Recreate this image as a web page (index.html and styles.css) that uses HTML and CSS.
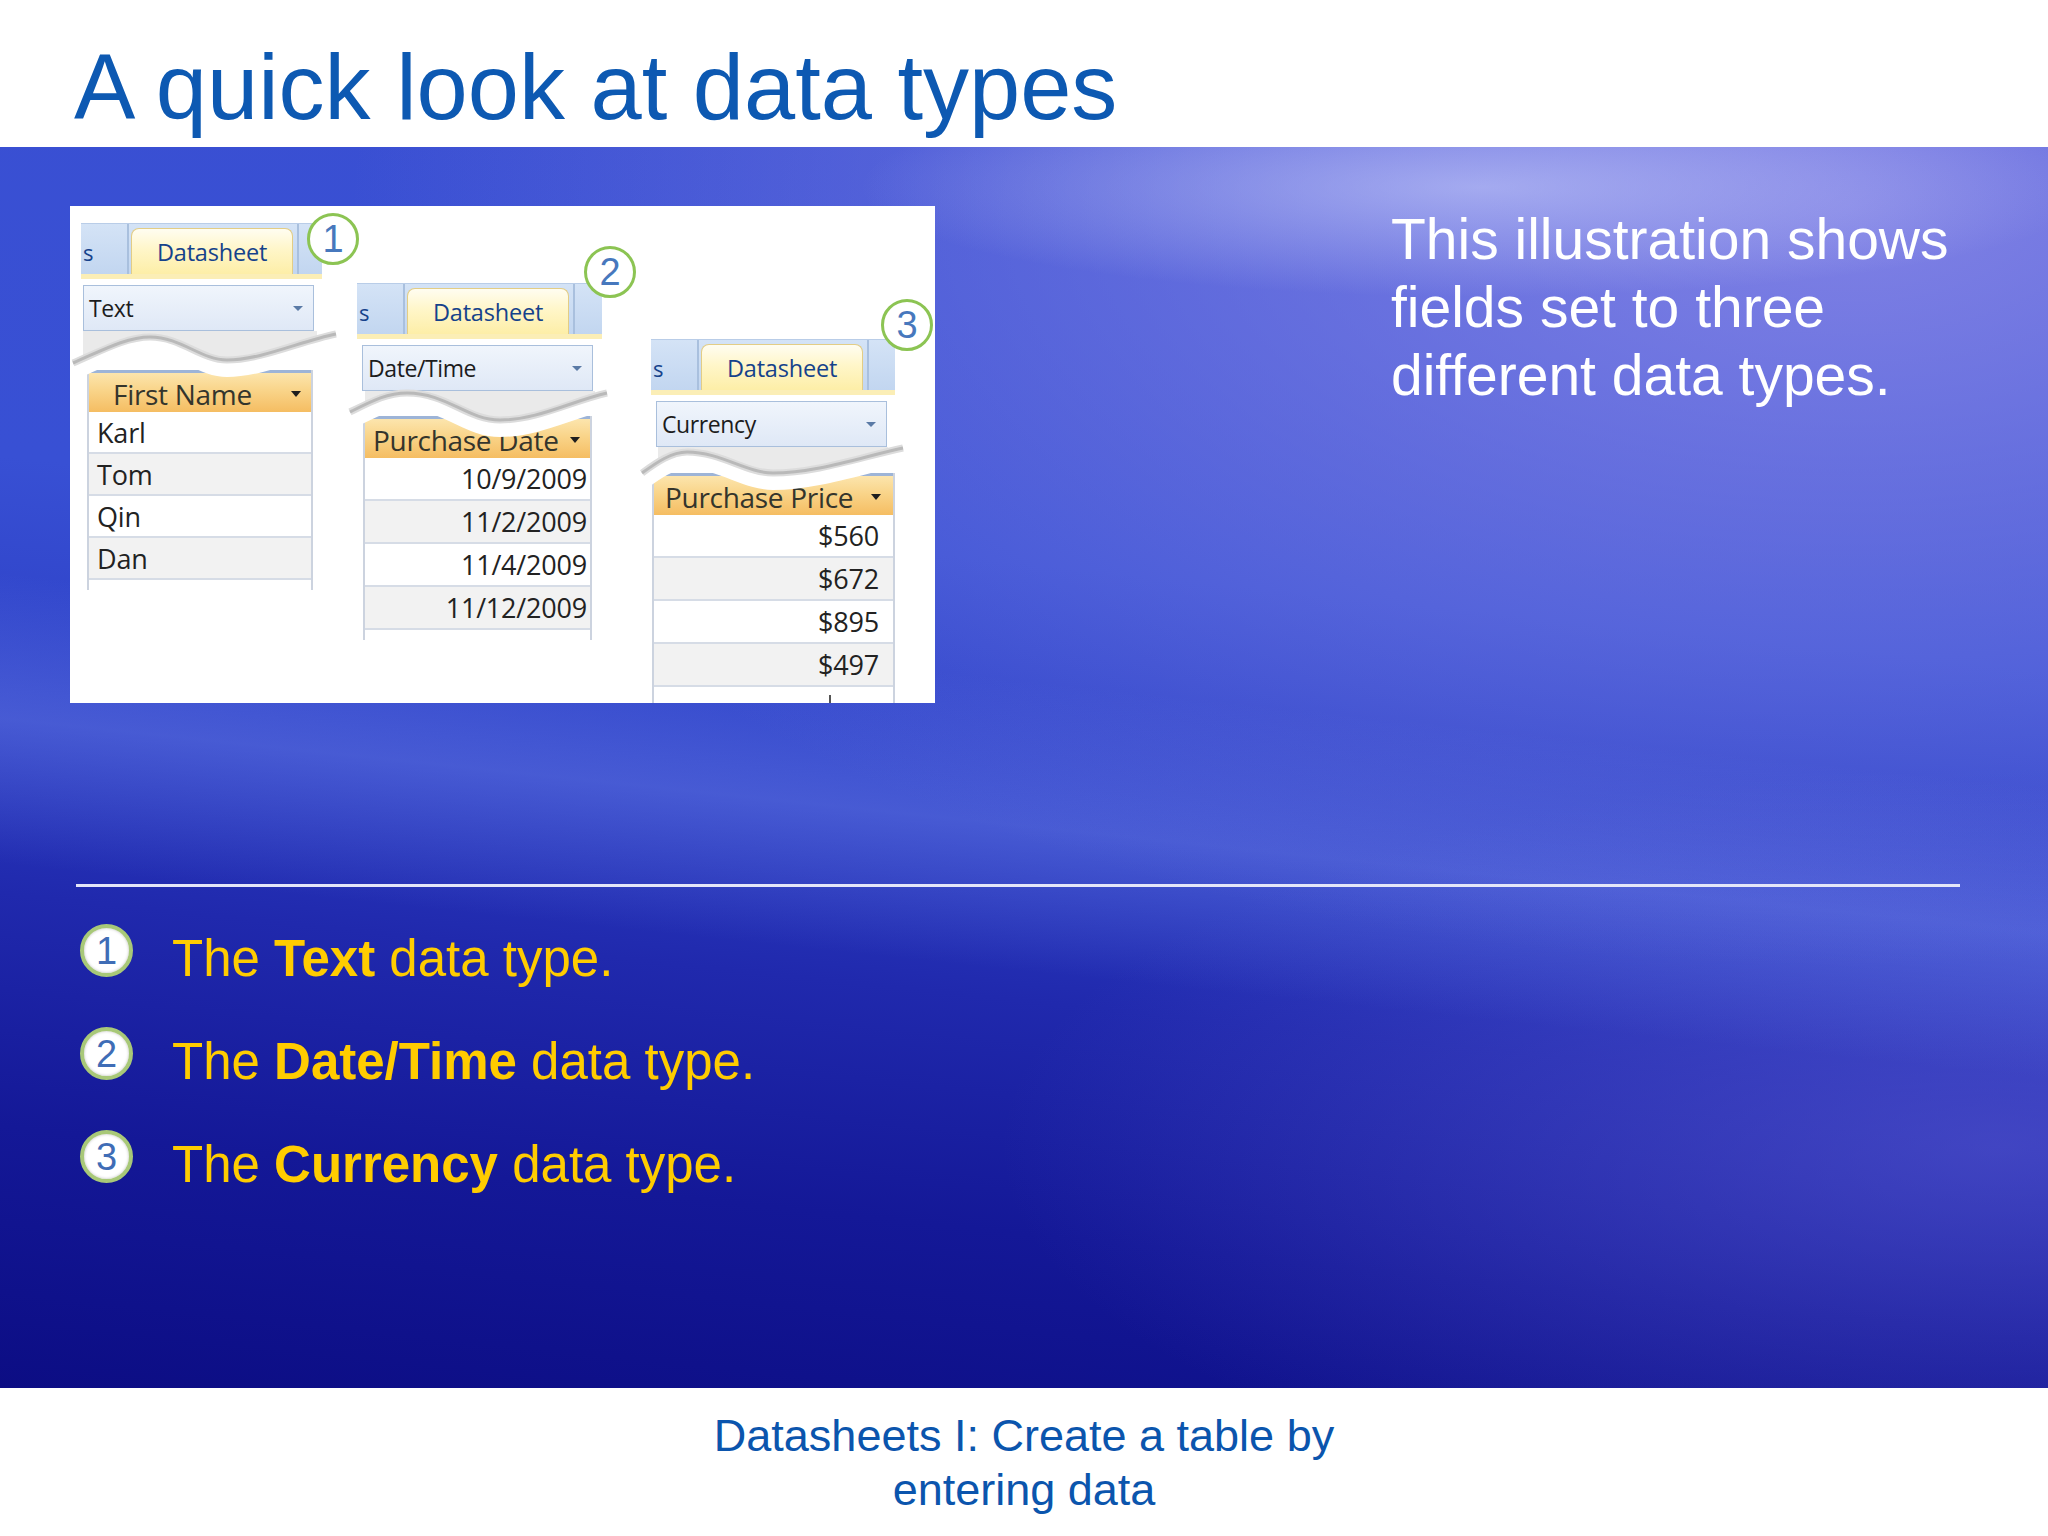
FILE: index.html
```html
<!DOCTYPE html>
<html lang="en">
<head>
<meta charset="utf-8">
<title>A quick look at data types</title>
<link rel="stylesheet" href="styles.css">
</head>
<body>
<div class="slide">
  <header class="head">
    <h1 class="title">A quick look at data types</h1>
  </header>

  <main class="stage">
    <div class="top">
      <div class="shot">
        <!-- Panel 1: Text -->
        <div class="panel p1">
          <div class="strip">
            <span class="strip-s">s</span><span class="sep"></span>
            <div class="tab">Datasheet</div><span class="sep sep-r"></span>
          </div>
          <div class="dd"><span>Text</span><i class="dd-arrow"></i></div>
          <div class="tear"></div>
          <div class="grid">
            <div class="colhdr"><span>First Name</span><i class="hdr-arrow"></i></div>
            <div class="row">Karl</div>
            <div class="row alt">Tom</div>
            <div class="row">Qin</div>
            <div class="row alt">Dan</div>
            <div class="stub"></div>
          </div>
          <svg class="wave" width="260" height="200" viewBox="0 0 260 200">
            <defs><clipPath id="c1"><rect x="2" y="108" width="234" height="40"/></clipPath></defs>
            <path clip-path="url(#c1)" fill="#eaeaea" d="M -8 108 L 255 108 L 255 111 C 220 118 180 137 146 137 C 120 137 100 114 69 114 C 45 114 20 128 -8 140 Z"/>
            <path fill="none" stroke="#ffffff" stroke-width="16" d="M -8 149 C 20 137 45 123 69 123 C 100 123 120 146 146 146 C 180 146 220 127 255 120"/>
            <path fill="none" stroke="#dcdcdc" stroke-width="7" d="M -8 140 C 20 128 45 114 69 114 C 100 114 120 137 146 137 C 180 137 220 118 255 111"/>
            <path fill="none" stroke="#b9b9b9" stroke-width="3" d="M -8 140 C 20 128 45 114 69 114 C 100 114 120 137 146 137 C 180 137 220 118 255 111"/>
          </svg>
          <span class="callout">1</span>
        </div>

        <!-- Panel 2: Date/Time -->
        <div class="panel p2">
          <div class="strip">
            <span class="strip-s">s</span><span class="sep"></span>
            <div class="tab">Datasheet</div><span class="sep sep-r"></span>
          </div>
          <div class="dd"><span>Date/Time</span><i class="dd-arrow"></i></div>
          <div class="tear"></div>
          <div class="grid">
            <div class="colhdr"><span>Purchase Date</span><i class="hdr-arrow"></i></div>
            <div class="row num-row">10/9/2009</div>
            <div class="row num-row alt">11/2/2009</div>
            <div class="row num-row">11/4/2009</div>
            <div class="row num-row alt">11/12/2009</div>
            <div class="stub"></div>
          </div>
          <svg class="wave" width="260" height="200" viewBox="0 0 260 200">
            <defs><clipPath id="c2"><rect x="8" y="108" width="230" height="40"/></clipPath></defs>
            <path clip-path="url(#c2)" fill="#eaeaea" d="M -7 108 L 250 108 L 250 110 C 215 118 180 137 143 137 C 110 137 90 110 50 110 C 30 110 15 118 -7 129 Z"/>
            <path fill="none" stroke="#ffffff" stroke-width="16" d="M -7 138 C 15 127 30 119 50 119 C 90 119 110 146 143 146 C 180 146 215 127 250 119"/>
            <path fill="none" stroke="#dcdcdc" stroke-width="7" d="M -7 129 C 15 118 30 110 50 110 C 90 110 110 137 143 137 C 180 137 215 118 250 110"/>
            <path fill="none" stroke="#b9b9b9" stroke-width="3" d="M -7 129 C 15 118 30 110 50 110 C 90 110 110 137 143 137 C 180 137 215 118 250 110"/>
          </svg>
          <span class="callout">2</span>
        </div>

        <!-- Panel 3: Currency -->
        <div class="panel p3">
          <div class="strip">
            <span class="strip-s">s</span><span class="sep"></span>
            <div class="tab">Datasheet</div><span class="sep sep-r"></span>
          </div>
          <div class="dd"><span>Currency</span><i class="dd-arrow"></i></div>
          <div class="tear"></div>
          <div class="grid">
            <div class="colhdr"><span>Purchase Price</span><i class="hdr-arrow"></i></div>
            <div class="row num-row">$560</div>
            <div class="row num-row alt">$672</div>
            <div class="row num-row">$895</div>
            <div class="row num-row alt">$497</div>
            <div class="row num-row cut"><i class="tick"></i></div>
          </div>
          <svg class="wave" width="260" height="200" viewBox="0 0 260 200">
            <defs><clipPath id="c3"><rect x="7" y="108" width="230" height="40"/></clipPath></defs>
            <path clip-path="url(#c3)" fill="#eaeaea" d="M -9 108 L 252 108 L 252 109 C 210 118 165 134 122 134 C 95 134 70 113 36 113 C 20 113 5 124 -9 134 Z"/>
            <path fill="none" stroke="#ffffff" stroke-width="16" d="M -9 143 C 5 133 20 122 36 122 C 70 122 95 143 122 143 C 165 143 210 127 252 118"/>
            <path fill="none" stroke="#dcdcdc" stroke-width="7" d="M -9 134 C 5 124 20 113 36 113 C 70 113 95 134 122 134 C 165 134 210 118 252 109"/>
            <path fill="none" stroke="#b9b9b9" stroke-width="3" d="M -9 134 C 5 124 20 113 36 113 C 70 113 95 134 122 134 C 165 134 210 118 252 109"/>
          </svg>
          <span class="callout">3</span>
        </div>
      </div>

      <p class="desc">This illustration shows fields set to three different data types.</p>
    </div>

    <hr class="rule">

    <ol class="points">
      <li class="point"><span class="num">1</span><span class="pt">The <b>Text</b> data type.</span></li>
      <li class="point"><span class="num">2</span><span class="pt">The <b>Date/Time</b> data type.</span></li>
      <li class="point"><span class="num">3</span><span class="pt">The <b>Currency</b> data type.</span></li>
    </ol>
  </main>

  <footer class="foot">Datasheets I: Create a table by<br>entering data</footer>
</div>
</body>
</html>
```

FILE: styles.css
```css
* { box-sizing: border-box; }

html, body {
  margin: 0;
  padding: 0;
  background: #ffffff;
}

.slide {
  width: 2048px;
  height: 1536px;
  overflow: hidden;
  font-family: "Liberation Sans", Arial, sans-serif;
}

/* ---------- title ---------- */
.head {
  height: 147px;
  padding: 42px 0 0 74px;
  background: #ffffff;
}

.title {
  margin: 0;
  font-size: 92px;
  line-height: 91px;
  font-weight: normal;
  color: #0d59b2;
  white-space: nowrap;
}

/* ---------- blue stage ---------- */
.stage {
  height: 1241px;
  overflow: hidden;
  background:
    radial-gradient(ellipse 620px 110px at 1480px 40px, rgba(200, 206, 250, 0.6), rgba(200, 206, 250, 0) 100%),
    radial-gradient(ellipse 1500px 760px at 1850px 60px, rgba(140, 138, 232, 0.85), rgba(140, 138, 232, 0) 100%),
    linear-gradient(186deg, rgba(120, 140, 236, 0) 44%, rgba(110, 132, 236, 0.42) 54%, rgba(120, 140, 236, 0) 64%),
    radial-gradient(ellipse 1000px 380px at 2000px 1000px, rgba(100, 100, 220, 0.5), rgba(100, 100, 220, 0) 100%),
    linear-gradient(186deg, #3a4fd2 0%, #3850d4 36%, #2d40c6 52%, #2029ad 66%, #141897 82%, #0c0d84 100%);
}

.top {
  display: flex;
  align-items: flex-start;
  padding: 59px 0 0 70px;
}

.shot {
  flex: 0 0 865px;
  height: 497px;
  background: #ffffff;
  overflow: hidden;
  display: flex;
  align-items: flex-start;
  font-family: "Open Sans", "Noto Sans", sans-serif;
}

.desc {
  margin: -1px 0 0 456px;
  width: 600px;
  font-size: 57px;
  line-height: 68px;
  color: #ffffff;
}

/* ---------- datasheet panels ---------- */
.panel {
  position: relative;
  flex: 0 0 auto;
}

.p1 { width: 241px; margin: 17px 0 0 11px; }
.p2 { width: 245px; margin: 77px 0 0 35px; }
.p3 { width: 244px; margin: 133px 0 0 49px; }

.strip {
  height: 56px;
  display: flex;
  align-items: flex-end;
  background: linear-gradient(#d4e3f6, #c2d6f0);
  border-top: 1px solid #b9cde8;
  border-bottom: 5px solid #fbeeb6;
}

.strip-s {
  width: 46px;
  align-self: center;
  padding-left: 2px;
  font-size: 22px;
  color: #15428b;
  line-height: 1;
  margin-top: 6px;
}

.sep {
  width: 2px;
  align-self: stretch;
  background: #a9c0de;
}

.sep-r { margin-left: 4px; }

.tab {
  width: 162px;
  height: 46px;
  margin-left: 2px;
  border: 1px solid #e3cd85;
  border-bottom: none;
  border-radius: 8px 8px 0 0;
  background: linear-gradient(#fffdf1, #fff6c9 45%, #fdeea7);
  display: flex;
  align-items: center;
  justify-content: center;
  font-size: 23.5px;
  letter-spacing: -0.2px;
  color: #15428b;
}

.dd {
  margin: 6px 0 0 5px;
  width: 231px;
  height: 46px;
  border: 1px solid #a9bfdc;
  background: linear-gradient(#f0f5fc, #dfe8f6);
  display: flex;
  align-items: center;
  justify-content: space-between;
  padding: 0 10px 0 5px;
  font-size: 23px;
  letter-spacing: -0.4px;
  color: #1c1c1c;
}

.p1 .dd { margin-left: 2px; }

.dd-arrow {
  width: 0;
  height: 0;
  border-left: 5px solid transparent;
  border-right: 5px solid transparent;
  border-top: 5px solid #5a7aa6;
}

.tear { height: 39px; }
.p2 .tear { height: 25px; }
.p3 .tear { height: 26px; }

.grid {
  margin-left: 6px;
  width: 226px;
  border-left: 2px solid #ccd3df;
  border-right: 2px solid #ccd3df;
}

.p2 .grid { width: 229px; }
.p3 .grid { margin-left: 1px; width: 243px; }

.colhdr {
  height: 42px;
  display: flex;
  align-items: center;
  justify-content: space-between;
  padding: 2px 10px 0 24px;
  border-top: 3px solid #9db4d7;
  background: linear-gradient(#fce5ad, #f9d489 45%, #f5bd62);
  font-size: 28px;
  letter-spacing: -0.3px;
  color: #34352c;
  white-space: nowrap;
}

.p2 .colhdr { padding-left: 8px; }
.p3 .colhdr { padding-left: 11px; padding-right: 12px; }

.hdr-arrow {
  flex: 0 0 auto;
  width: 0;
  height: 0;
  border-left: 5px solid transparent;
  border-right: 5px solid transparent;
  border-top: 6px solid #1e1e1e;
}

.row {
  height: 42px;
  display: flex;
  align-items: center;
  padding-left: 8px;
  border-bottom: 2px solid #d6dce6;
  background: #ffffff;
  font-size: 27px;
  letter-spacing: -0.2px;
  color: #222222;
}

.row.alt { background: #f2f2f2; }

.num-row {
  justify-content: flex-end;
  padding-right: 3px;
}

.p2 .row { height: 43px; }
.p3 .row { height: 43px; }
.p3 .num-row { padding-right: 14px; }

.row.cut { align-items: flex-start; }

.tick {
  width: 2px;
  height: 12px;
  margin: 8px 48px 0 0;
  background: #555555;
}

.stub { height: 10px; }

.wave {
  position: absolute;
  left: 0;
  top: 0;
  overflow: visible;
  pointer-events: none;
}

.callout {
  position: absolute;
  width: 52px;
  height: 52px;
  border: 3px solid #8cc453;
  border-radius: 50%;
  background: #ffffff;
  display: flex;
  align-items: center;
  justify-content: center;
  font-family: "Liberation Sans", Arial, sans-serif;
  font-size: 38px;
  color: #4778bd;
}

.p1 .callout { left: 226px; top: -10px; }
.p2 .callout { left: 227px; top: -37px; }
.p3 .callout { left: 230px; top: -40px; }

/* ---------- rule + list ---------- */
.rule {
  margin: 181px 88px 0 76px;
  height: 3px;
  border: none;
  background: #e4e6f8;
}

.points {
  list-style: none;
  margin: 20px 0 0 80px;
  padding: 0;
}

.point {
  height: 103px;
  display: flex;
  align-items: center;
}

.num {
  flex: 0 0 53px;
  height: 53px;
  margin: 0 39px 16px 0;
  border: 4px solid #a8c878;
  border-radius: 50%;
  background: #ffffff;
  box-shadow: inset 0 0 3px rgba(0, 0, 0, 0.25);
  display: flex;
  align-items: center;
  justify-content: center;
  font-size: 38px;
  line-height: 1;
  color: #3f6db6;
}

.pt {
  font-size: 51px;
  line-height: 62px;
  color: #ffcc00;
  white-space: nowrap;
}

.pt b { font-weight: bold; }

/* ---------- footer ---------- */
.foot {
  height: 148px;
  padding-top: 21px;
  text-align: center;
  font-size: 45px;
  line-height: 54px;
  color: #0b55ad;
  background: #ffffff;
}
```
